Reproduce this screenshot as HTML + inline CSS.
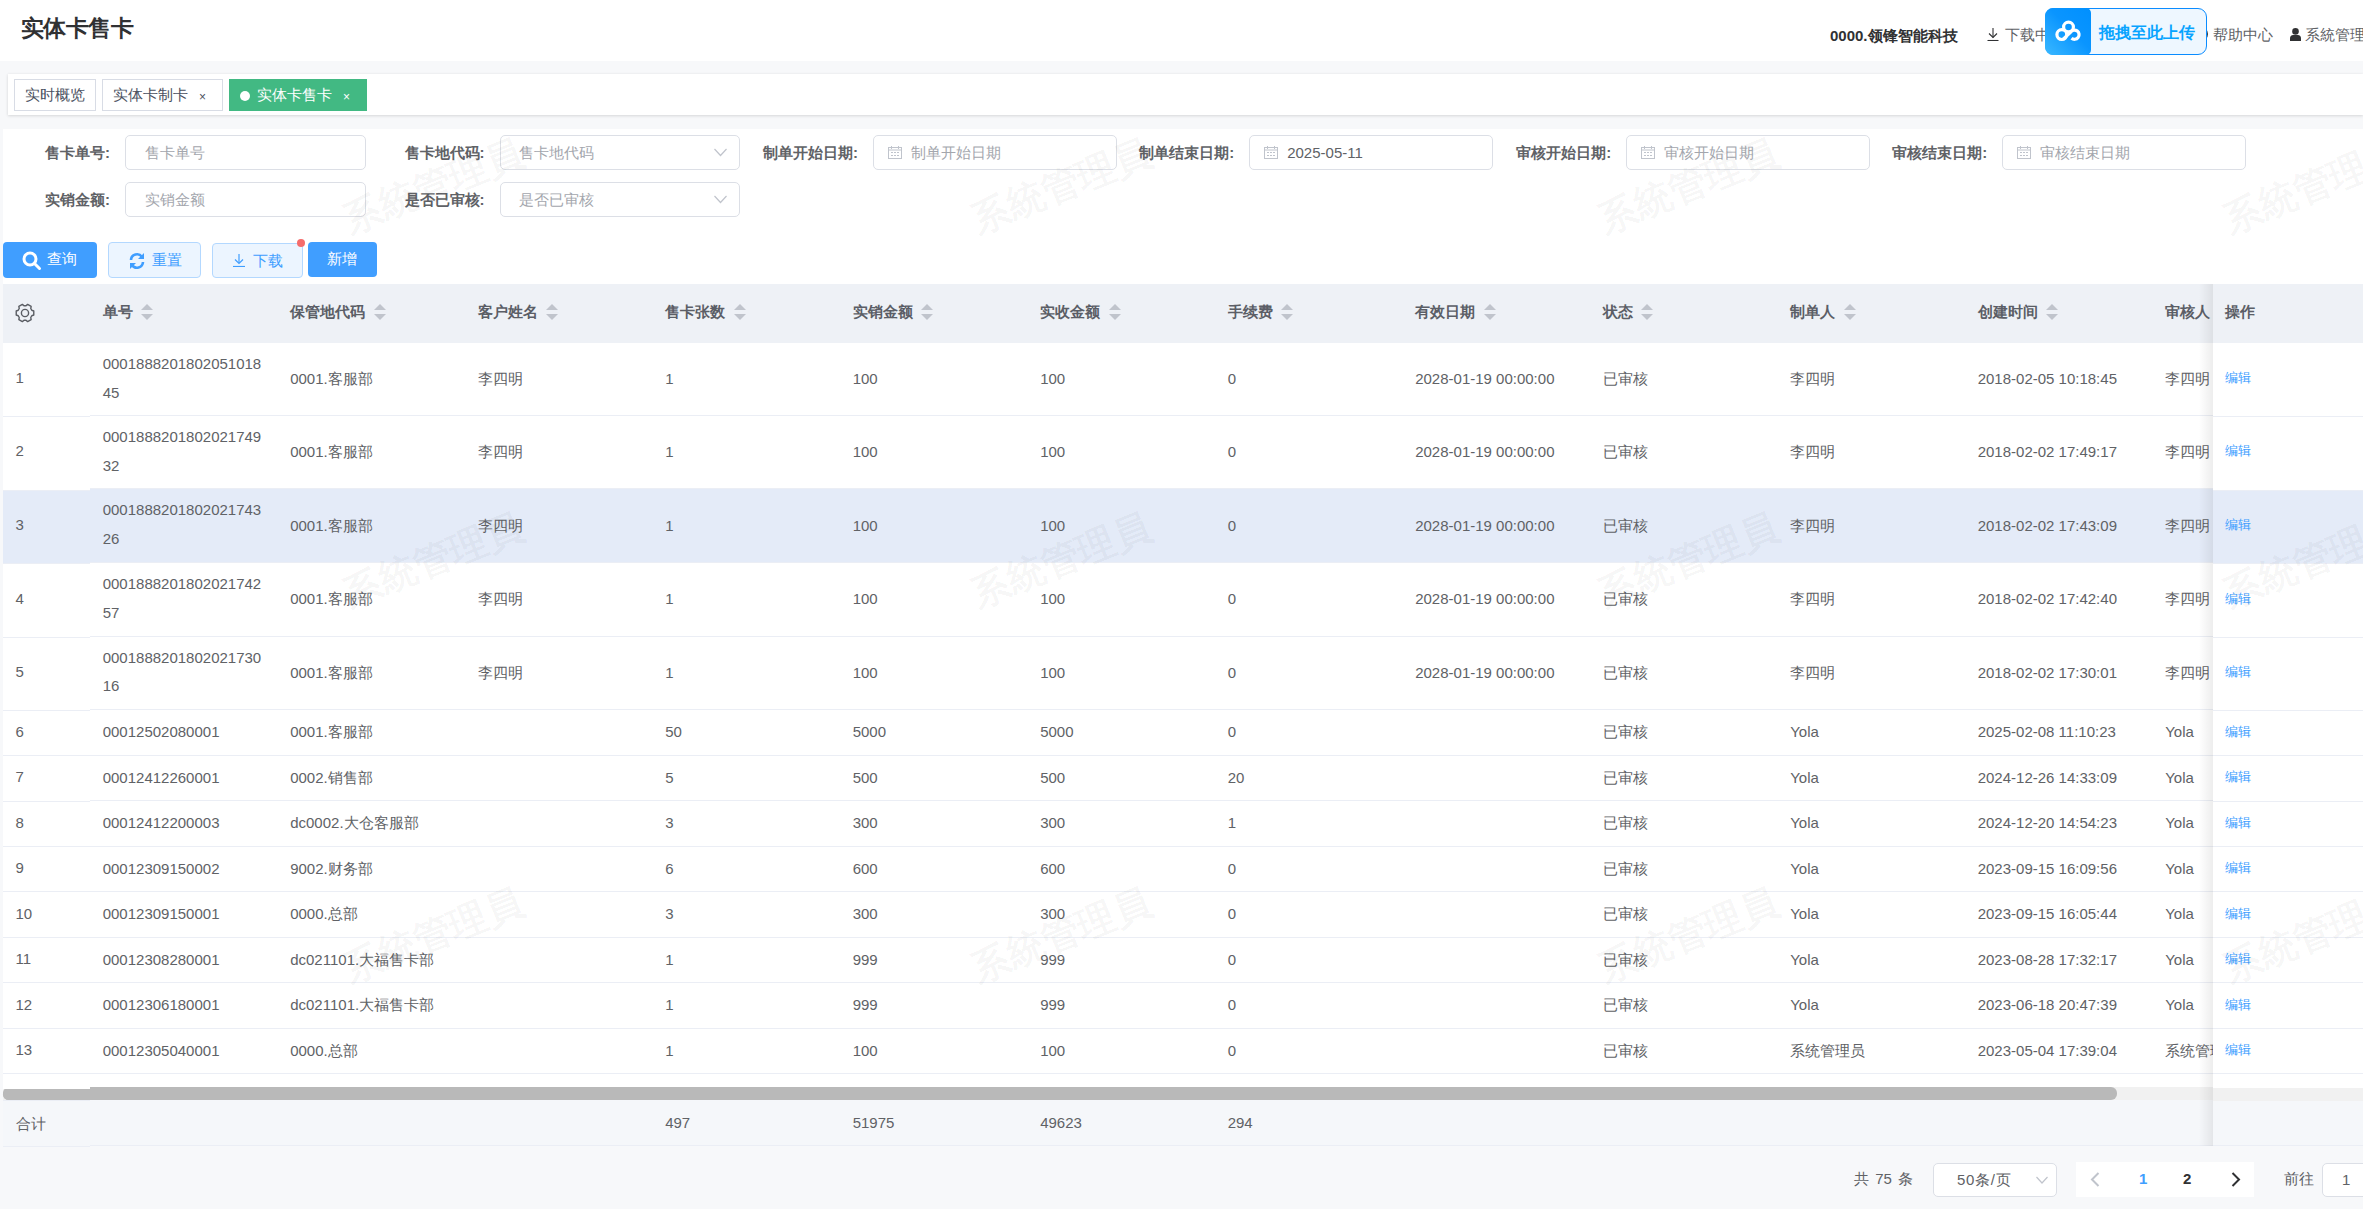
<!DOCTYPE html><html><head><meta charset="utf-8"><style>
*{box-sizing:border-box;margin:0;padding:0}
html,body{width:2363px;height:1209px;overflow:hidden}
body{position:relative;background:#f7f8fa;font-family:"Liberation Sans",sans-serif;font-size:15px;color:#606266}
.abs{position:absolute}
#hdr{left:0;top:0;width:2363px;height:61px;background:#fff}
#title{left:20.5px;top:11px;letter-spacing:-0.4px;font-size:22.5px;font-weight:bold;color:#303133;line-height:36px;white-space:nowrap}
#tags{left:8px;top:74px;width:2355px;height:41px;background:#fff;box-shadow:0 1px 3px 0 rgba(0,0,0,.12),0 0 3px 0 rgba(0,0,0,.04)}
.tab{position:absolute;top:79px;height:32px;border:1px solid #d8dce5;background:#fff;color:#495060;font-size:15px;line-height:30px;white-space:nowrap;padding-left:10px}
.tab .x{position:absolute;font-size:12px;color:#495060;margin-top:1.5px}
#form{left:3px;top:129px;width:2360px;height:155px;background:#fff}
.lbl{position:absolute;font-weight:bold;font-size:15px;color:#606266;white-space:nowrap;line-height:35px;text-align:right}
.inp{position:absolute;height:35px;border:1px solid #dcdfe6;border-radius:5px;background:#fff;color:#a3a6ad;font-size:15px;line-height:33px;white-space:nowrap}
.btn{position:absolute;top:242px;height:36px;border-radius:4px;font-size:15px;line-height:34px;white-space:nowrap;text-align:center}
#tbl{left:3px;top:284px;width:2360px;height:862px;background:#fff;overflow:hidden}
.th{position:absolute;top:0;height:59px;background:#eef1f6}
.cell{position:absolute;white-space:nowrap;font-size:15px;color:#606266}
.hc{position:absolute;white-space:nowrap;font-size:15px;font-weight:bold;color:#5b5e66;top:20px;line-height:18px}
.row{position:absolute;left:0;width:2360px;border-bottom:1px solid #ebeef5;background:#fff}
</style></head><body>
<div id="hdr" class="abs"></div>
<div id="title" class="abs">实体卡售卡</div>
<div class="abs" style="left:1830px;top:25px;font-size:15px;font-weight:bold;color:#303133;line-height:22px;white-space:nowrap">0000.领锋智能科技</div>
<svg class="abs" style="left:1987px;top:28px" width="12" height="13" viewBox="0 0 12 13"><line x1="6" y1="0" x2="6" y2="9.5" stroke="#303133" stroke-width="1.1"/><polyline points="2,5.5 6,9.5 10,5.5" fill="none" stroke="#303133" stroke-width="1.1"/><line x1="0.5" y1="12.5" x2="11.5" y2="12.5" stroke="#303133" stroke-width="1.1"/></svg>
<div class="abs" style="left:2005px;top:24px;font-size:15px;color:#606266;line-height:22px;white-space:nowrap">下载中心</div>
<div class="abs" style="left:2194px;top:27px;width:14px;height:14px;border-radius:50%;background:#303133"></div>
<div class="abs" style="left:2213px;top:24px;font-size:15px;color:#606266;line-height:22px;white-space:nowrap">帮助中心</div>
<svg class="abs" style="left:2290px;top:28px" width="11" height="13" viewBox="0 0 11 13"><circle cx="5.5" cy="3.4" r="3.3" fill="#303133"/><path d="M0 13 L0 10.5 Q0 7.2 3.2 7 L7.8 7 Q11 7.2 11 10.5 L11 13 Z" fill="#303133"/></svg>
<div class="abs" style="left:2305px;top:24px;font-size:15px;color:#606266;line-height:22px;white-space:nowrap">系統管理員</div>
<div class="abs" style="left:2045px;top:8px;width:162px;height:47px;border:1.3px solid #0a8cff;border-radius:9px;background:#eef7ff"></div>
<div class="abs" style="left:2045px;top:8px;width:46px;height:47px;border-radius:8px 5px 5px 8px;background:linear-gradient(225deg,#0090ff 0%,#0a95ff 45%,#3ab8ff 100%)"></div>
<svg class="abs" style="left:2053px;top:18px" width="30" height="26" viewBox="0 0 30 26"><g fill="none" stroke="#fff" stroke-width="3.2"><circle cx="15.5" cy="9" r="4.9"/><circle cx="8.8" cy="16.6" r="4.9"/><path d="M10.5 20.8 L17.6 14.2 A4.6 4.6 0 1 1 18.5 20.2"/></g></svg>
<div class="abs" style="left:2099px;top:20px;font-size:16.3px;font-weight:bold;color:#08a4ff;line-height:24px;white-space:nowrap">拖拽至此上传</div>
<div id="tags" class="abs"></div>
<div class="tab" style="left:14px;width:82px">实时概览</div>
<div class="tab" style="left:102px;width:121px">实体卡制卡<span class="x" style="left:96px;top:0">×</span></div>
<div class="tab" style="left:229px;width:138px;background:#42b983;border-color:#42b983;color:#fff"><span style="position:absolute;left:10px;top:11px;width:10px;height:10px;border-radius:50%;background:#fff"></span><span style="position:absolute;left:27px;top:0">实体卡售卡</span><span class="x" style="left:113px;top:0;color:#fff">×</span></div>
<div id="form" class="abs"></div>
<div class="lbl" style="right:2253px;top:135px">售卡单号:</div>
<div class="inp" style="left:125px;top:135px;width:241px;padding-left:18.5px">售卡单号</div>
<div class="lbl" style="right:1878.5px;top:135px">售卡地代码:</div>
<div class="inp" style="left:499.5px;top:135px;width:240.5px;padding-left:18.5px">售卡地代码<svg style="position:absolute;left:213px;top:12px" width="13" height="9" viewBox="0 0 13 9"><polyline points="0.5,1 6.5,7.5 12.5,1" fill="none" stroke="#c0c4cc" stroke-width="1.2"/></svg></div>
<div class="lbl" style="right:1505px;top:135px">制单开始日期:</div>
<div class="inp" style="left:873px;top:135px;width:243.5px;padding-left:37px;color:#a3a6ad">制单开始日期<svg style="position:absolute;left:14px;top:10px" width="14" height="13" viewBox="0 0 14 13"><rect x="0.5" y="1.5" width="13" height="11" fill="none" stroke="#c0c4cc"/><line x1="0.5" y1="4" x2="13.5" y2="4" stroke="#c0c4cc"/><line x1="3.5" y1="0" x2="3.5" y2="3" stroke="#c0c4cc"/><line x1="10.5" y1="0" x2="10.5" y2="3" stroke="#c0c4cc"/><g fill="#c0c4cc"><rect x="3" y="6" width="2" height="1"/><rect x="6" y="6" width="2" height="1"/><rect x="9" y="6" width="2" height="1"/><rect x="3" y="9" width="2" height="1"/><rect x="6" y="9" width="2" height="1"/><rect x="9" y="9" width="2" height="1"/></g></svg></div>
<div class="lbl" style="right:1128.8px;top:135px">制单结束日期:</div>
<div class="inp" style="left:1249.2px;top:135px;width:243.5px;padding-left:37px;color:#606266">2025-05-11<svg style="position:absolute;left:14px;top:10px" width="14" height="13" viewBox="0 0 14 13"><rect x="0.5" y="1.5" width="13" height="11" fill="none" stroke="#c0c4cc"/><line x1="0.5" y1="4" x2="13.5" y2="4" stroke="#c0c4cc"/><line x1="3.5" y1="0" x2="3.5" y2="3" stroke="#c0c4cc"/><line x1="10.5" y1="0" x2="10.5" y2="3" stroke="#c0c4cc"/><g fill="#c0c4cc"><rect x="3" y="6" width="2" height="1"/><rect x="6" y="6" width="2" height="1"/><rect x="9" y="6" width="2" height="1"/><rect x="3" y="9" width="2" height="1"/><rect x="6" y="9" width="2" height="1"/><rect x="9" y="9" width="2" height="1"/></g></svg></div>
<div class="lbl" style="right:751.7px;top:135px">审核开始日期:</div>
<div class="inp" style="left:1626.3px;top:135px;width:243.5px;padding-left:37px;color:#a3a6ad">审核开始日期<svg style="position:absolute;left:14px;top:10px" width="14" height="13" viewBox="0 0 14 13"><rect x="0.5" y="1.5" width="13" height="11" fill="none" stroke="#c0c4cc"/><line x1="0.5" y1="4" x2="13.5" y2="4" stroke="#c0c4cc"/><line x1="3.5" y1="0" x2="3.5" y2="3" stroke="#c0c4cc"/><line x1="10.5" y1="0" x2="10.5" y2="3" stroke="#c0c4cc"/><g fill="#c0c4cc"><rect x="3" y="6" width="2" height="1"/><rect x="6" y="6" width="2" height="1"/><rect x="9" y="6" width="2" height="1"/><rect x="3" y="9" width="2" height="1"/><rect x="6" y="9" width="2" height="1"/><rect x="9" y="9" width="2" height="1"/></g></svg></div>
<div class="lbl" style="right:375.70000000000005px;top:135px">审核结束日期:</div>
<div class="inp" style="left:2002.3px;top:135px;width:243.5px;padding-left:37px;color:#a3a6ad">审核结束日期<svg style="position:absolute;left:14px;top:10px" width="14" height="13" viewBox="0 0 14 13"><rect x="0.5" y="1.5" width="13" height="11" fill="none" stroke="#c0c4cc"/><line x1="0.5" y1="4" x2="13.5" y2="4" stroke="#c0c4cc"/><line x1="3.5" y1="0" x2="3.5" y2="3" stroke="#c0c4cc"/><line x1="10.5" y1="0" x2="10.5" y2="3" stroke="#c0c4cc"/><g fill="#c0c4cc"><rect x="3" y="6" width="2" height="1"/><rect x="6" y="6" width="2" height="1"/><rect x="9" y="6" width="2" height="1"/><rect x="3" y="9" width="2" height="1"/><rect x="6" y="9" width="2" height="1"/><rect x="9" y="9" width="2" height="1"/></g></svg></div>
<div class="lbl" style="right:2253px;top:182px">实销金额:</div>
<div class="inp" style="left:125px;top:182px;width:241px;padding-left:18.5px">实销金额</div>
<div class="lbl" style="right:1878.5px;top:182px">是否已审核:</div>
<div class="inp" style="left:499.5px;top:182px;width:240.5px;padding-left:18.5px">是否已审核<svg style="position:absolute;left:213px;top:12px" width="13" height="9" viewBox="0 0 13 9"><polyline points="0.5,1 6.5,7.5 12.5,1" fill="none" stroke="#c0c4cc" stroke-width="1.2"/></svg></div>
<div class="btn" style="left:3px;width:94px;background:#409eff;color:#fff;padding-left:23px"><svg style="position:absolute;left:19px;top:9px" width="20" height="20" viewBox="0 0 20 20"><circle cx="8" cy="8" r="6" fill="none" stroke="#fff" stroke-width="3"/><line x1="12.5" y1="12.5" x2="17.5" y2="17.5" stroke="#fff" stroke-width="3" stroke-linecap="round"/></svg>查询</div>
<div class="btn" style="left:108px;width:93px;background:#ecf5ff;border:1px solid #b3d8ff;color:#409eff;padding-left:24px"><svg style="position:absolute;left:19px;top:9px" width="18" height="18" viewBox="0 0 18 18"><path d="M3 8 A6 6 0 0 1 14 5" fill="none" stroke="#409eff" stroke-width="2.6"/><path d="M15 10 A6 6 0 0 1 4 13" fill="none" stroke="#409eff" stroke-width="2.6"/><polygon points="16,1 16,7 10,7" fill="#409eff"/><polygon points="2,17 2,11 8,11" fill="#409eff"/></svg>重置</div>
<div class="btn" style="left:212px;top:243px;height:35px;width:91px;background:#ecf5ff;border:1px solid #b3d8ff;color:#409eff;padding-left:20px"><svg style="position:absolute;left:20px;top:10px" width="12" height="13" viewBox="0 0 12 13"><line x1="6" y1="0" x2="6" y2="9" stroke="#409eff" stroke-width="1.2"/><polyline points="2,5.5 6,9.5 10,5.5" fill="none" stroke="#409eff" stroke-width="1.2"/><line x1="0" y1="12.5" x2="12" y2="12.5" stroke="#409eff" stroke-width="1.2"/></svg>下载</div>
<div class="abs" style="left:297px;top:239px;width:8px;height:8px;border-radius:50%;background:#f56c6c"></div>
<div class="btn" style="left:308px;width:69px;height:35px;background:#409eff;color:#fff;padding-right:2px">新增</div>
<div class="abs" style="left:3px;top:284px;width:2360px;height:862px;background:#fff"></div>
<div class="abs" style="left:3px;top:284px;width:2360px;height:59px;background:#eef1f6"></div>
<div class="abs" style="left:3px;top:343.00px;width:2360px;height:73.00px;background:#fff;border-bottom:1px solid #ebeef5"></div>
<div class="cell" style="left:102.7px;top:349.90px;line-height:28.75px">0001888201802051018<br>45</div>
<div class="cell" style="left:290.2px;top:365.00px;line-height:28.75px">0001.客服部</div>
<div class="cell" style="left:477.7px;top:365.00px;line-height:28.75px">李四明</div>
<div class="cell" style="left:665.2px;top:365.00px;line-height:28.75px">1</div>
<div class="cell" style="left:852.7px;top:365.00px;line-height:28.75px">100</div>
<div class="cell" style="left:1040.2px;top:365.00px;line-height:28.75px">100</div>
<div class="cell" style="left:1227.7px;top:365.00px;line-height:28.75px">0</div>
<div class="cell" style="left:1415.2px;top:365.00px;line-height:28.75px">2028-01-19 00:00:00</div>
<div class="cell" style="left:1602.7px;top:365.00px;line-height:28.75px">已审核</div>
<div class="cell" style="left:1790.2px;top:365.00px;line-height:28.75px">李四明</div>
<div class="cell" style="left:1977.7px;top:365.00px;line-height:28.75px">2018-02-05 10:18:45</div>
<div class="cell" style="left:2165.2px;top:365.00px;line-height:28.75px;width:48px;overflow:hidden">李四明</div>
<div class="abs" style="left:3px;top:416.00px;width:2360px;height:73.00px;background:#fff;border-bottom:1px solid #ebeef5"></div>
<div class="cell" style="left:102.7px;top:422.90px;line-height:28.75px">0001888201802021749<br>32</div>
<div class="cell" style="left:290.2px;top:438.00px;line-height:28.75px">0001.客服部</div>
<div class="cell" style="left:477.7px;top:438.00px;line-height:28.75px">李四明</div>
<div class="cell" style="left:665.2px;top:438.00px;line-height:28.75px">1</div>
<div class="cell" style="left:852.7px;top:438.00px;line-height:28.75px">100</div>
<div class="cell" style="left:1040.2px;top:438.00px;line-height:28.75px">100</div>
<div class="cell" style="left:1227.7px;top:438.00px;line-height:28.75px">0</div>
<div class="cell" style="left:1415.2px;top:438.00px;line-height:28.75px">2028-01-19 00:00:00</div>
<div class="cell" style="left:1602.7px;top:438.00px;line-height:28.75px">已审核</div>
<div class="cell" style="left:1790.2px;top:438.00px;line-height:28.75px">李四明</div>
<div class="cell" style="left:1977.7px;top:438.00px;line-height:28.75px">2018-02-02 17:49:17</div>
<div class="cell" style="left:2165.2px;top:438.00px;line-height:28.75px;width:48px;overflow:hidden">李四明</div>
<div class="abs" style="left:3px;top:489.00px;width:2360px;height:74.00px;background:#e4ebf8;border-bottom:1px solid #ebeef5"></div>
<div class="cell" style="left:102.7px;top:496.40px;line-height:28.75px">0001888201802021743<br>26</div>
<div class="cell" style="left:290.2px;top:511.50px;line-height:28.75px">0001.客服部</div>
<div class="cell" style="left:477.7px;top:511.50px;line-height:28.75px">李四明</div>
<div class="cell" style="left:665.2px;top:511.50px;line-height:28.75px">1</div>
<div class="cell" style="left:852.7px;top:511.50px;line-height:28.75px">100</div>
<div class="cell" style="left:1040.2px;top:511.50px;line-height:28.75px">100</div>
<div class="cell" style="left:1227.7px;top:511.50px;line-height:28.75px">0</div>
<div class="cell" style="left:1415.2px;top:511.50px;line-height:28.75px">2028-01-19 00:00:00</div>
<div class="cell" style="left:1602.7px;top:511.50px;line-height:28.75px">已审核</div>
<div class="cell" style="left:1790.2px;top:511.50px;line-height:28.75px">李四明</div>
<div class="cell" style="left:1977.7px;top:511.50px;line-height:28.75px">2018-02-02 17:43:09</div>
<div class="cell" style="left:2165.2px;top:511.50px;line-height:28.75px;width:48px;overflow:hidden">李四明</div>
<div class="abs" style="left:3px;top:563.00px;width:2360px;height:73.50px;background:#fff;border-bottom:1px solid #ebeef5"></div>
<div class="cell" style="left:102.7px;top:570.15px;line-height:28.75px">0001888201802021742<br>57</div>
<div class="cell" style="left:290.2px;top:585.25px;line-height:28.75px">0001.客服部</div>
<div class="cell" style="left:477.7px;top:585.25px;line-height:28.75px">李四明</div>
<div class="cell" style="left:665.2px;top:585.25px;line-height:28.75px">1</div>
<div class="cell" style="left:852.7px;top:585.25px;line-height:28.75px">100</div>
<div class="cell" style="left:1040.2px;top:585.25px;line-height:28.75px">100</div>
<div class="cell" style="left:1227.7px;top:585.25px;line-height:28.75px">0</div>
<div class="cell" style="left:1415.2px;top:585.25px;line-height:28.75px">2028-01-19 00:00:00</div>
<div class="cell" style="left:1602.7px;top:585.25px;line-height:28.75px">已审核</div>
<div class="cell" style="left:1790.2px;top:585.25px;line-height:28.75px">李四明</div>
<div class="cell" style="left:1977.7px;top:585.25px;line-height:28.75px">2018-02-02 17:42:40</div>
<div class="cell" style="left:2165.2px;top:585.25px;line-height:28.75px;width:48px;overflow:hidden">李四明</div>
<div class="abs" style="left:3px;top:636.50px;width:2360px;height:73.50px;background:#fff;border-bottom:1px solid #ebeef5"></div>
<div class="cell" style="left:102.7px;top:643.65px;line-height:28.75px">0001888201802021730<br>16</div>
<div class="cell" style="left:290.2px;top:658.75px;line-height:28.75px">0001.客服部</div>
<div class="cell" style="left:477.7px;top:658.75px;line-height:28.75px">李四明</div>
<div class="cell" style="left:665.2px;top:658.75px;line-height:28.75px">1</div>
<div class="cell" style="left:852.7px;top:658.75px;line-height:28.75px">100</div>
<div class="cell" style="left:1040.2px;top:658.75px;line-height:28.75px">100</div>
<div class="cell" style="left:1227.7px;top:658.75px;line-height:28.75px">0</div>
<div class="cell" style="left:1415.2px;top:658.75px;line-height:28.75px">2028-01-19 00:00:00</div>
<div class="cell" style="left:1602.7px;top:658.75px;line-height:28.75px">已审核</div>
<div class="cell" style="left:1790.2px;top:658.75px;line-height:28.75px">李四明</div>
<div class="cell" style="left:1977.7px;top:658.75px;line-height:28.75px">2018-02-02 17:30:01</div>
<div class="cell" style="left:2165.2px;top:658.75px;line-height:28.75px;width:48px;overflow:hidden">李四明</div>
<div class="abs" style="left:3px;top:710.00px;width:2360px;height:45.50px;background:#fff;border-bottom:1px solid #ebeef5"></div>
<div class="cell" style="left:102.7px;top:718.05px;line-height:28.75px">00012502080001</div>
<div class="cell" style="left:290.2px;top:718.05px;line-height:28.75px">0001.客服部</div>
<div class="cell" style="left:665.2px;top:718.05px;line-height:28.75px">50</div>
<div class="cell" style="left:852.7px;top:718.05px;line-height:28.75px">5000</div>
<div class="cell" style="left:1040.2px;top:718.05px;line-height:28.75px">5000</div>
<div class="cell" style="left:1227.7px;top:718.05px;line-height:28.75px">0</div>
<div class="cell" style="left:1602.7px;top:718.05px;line-height:28.75px">已审核</div>
<div class="cell" style="left:1790.2px;top:718.05px;line-height:28.75px">Yola</div>
<div class="cell" style="left:1977.7px;top:718.05px;line-height:28.75px">2025-02-08 11:10:23</div>
<div class="cell" style="left:2165.2px;top:718.05px;line-height:28.75px;width:48px;overflow:hidden">Yola</div>
<div class="abs" style="left:3px;top:755.50px;width:2360px;height:45.50px;background:#fff;border-bottom:1px solid #ebeef5"></div>
<div class="cell" style="left:102.7px;top:763.55px;line-height:28.75px">00012412260001</div>
<div class="cell" style="left:290.2px;top:763.55px;line-height:28.75px">0002.销售部</div>
<div class="cell" style="left:665.2px;top:763.55px;line-height:28.75px">5</div>
<div class="cell" style="left:852.7px;top:763.55px;line-height:28.75px">500</div>
<div class="cell" style="left:1040.2px;top:763.55px;line-height:28.75px">500</div>
<div class="cell" style="left:1227.7px;top:763.55px;line-height:28.75px">20</div>
<div class="cell" style="left:1602.7px;top:763.55px;line-height:28.75px">已审核</div>
<div class="cell" style="left:1790.2px;top:763.55px;line-height:28.75px">Yola</div>
<div class="cell" style="left:1977.7px;top:763.55px;line-height:28.75px">2024-12-26 14:33:09</div>
<div class="cell" style="left:2165.2px;top:763.55px;line-height:28.75px;width:48px;overflow:hidden">Yola</div>
<div class="abs" style="left:3px;top:801.00px;width:2360px;height:45.50px;background:#fff;border-bottom:1px solid #ebeef5"></div>
<div class="cell" style="left:102.7px;top:809.05px;line-height:28.75px">00012412200003</div>
<div class="cell" style="left:290.2px;top:809.05px;line-height:28.75px">dc0002.大仓客服部</div>
<div class="cell" style="left:665.2px;top:809.05px;line-height:28.75px">3</div>
<div class="cell" style="left:852.7px;top:809.05px;line-height:28.75px">300</div>
<div class="cell" style="left:1040.2px;top:809.05px;line-height:28.75px">300</div>
<div class="cell" style="left:1227.7px;top:809.05px;line-height:28.75px">1</div>
<div class="cell" style="left:1602.7px;top:809.05px;line-height:28.75px">已审核</div>
<div class="cell" style="left:1790.2px;top:809.05px;line-height:28.75px">Yola</div>
<div class="cell" style="left:1977.7px;top:809.05px;line-height:28.75px">2024-12-20 14:54:23</div>
<div class="cell" style="left:2165.2px;top:809.05px;line-height:28.75px;width:48px;overflow:hidden">Yola</div>
<div class="abs" style="left:3px;top:846.50px;width:2360px;height:45.50px;background:#fff;border-bottom:1px solid #ebeef5"></div>
<div class="cell" style="left:102.7px;top:854.55px;line-height:28.75px">00012309150002</div>
<div class="cell" style="left:290.2px;top:854.55px;line-height:28.75px">9002.财务部</div>
<div class="cell" style="left:665.2px;top:854.55px;line-height:28.75px">6</div>
<div class="cell" style="left:852.7px;top:854.55px;line-height:28.75px">600</div>
<div class="cell" style="left:1040.2px;top:854.55px;line-height:28.75px">600</div>
<div class="cell" style="left:1227.7px;top:854.55px;line-height:28.75px">0</div>
<div class="cell" style="left:1602.7px;top:854.55px;line-height:28.75px">已审核</div>
<div class="cell" style="left:1790.2px;top:854.55px;line-height:28.75px">Yola</div>
<div class="cell" style="left:1977.7px;top:854.55px;line-height:28.75px">2023-09-15 16:09:56</div>
<div class="cell" style="left:2165.2px;top:854.55px;line-height:28.75px;width:48px;overflow:hidden">Yola</div>
<div class="abs" style="left:3px;top:892.00px;width:2360px;height:45.50px;background:#fff;border-bottom:1px solid #ebeef5"></div>
<div class="cell" style="left:102.7px;top:900.05px;line-height:28.75px">00012309150001</div>
<div class="cell" style="left:290.2px;top:900.05px;line-height:28.75px">0000.总部</div>
<div class="cell" style="left:665.2px;top:900.05px;line-height:28.75px">3</div>
<div class="cell" style="left:852.7px;top:900.05px;line-height:28.75px">300</div>
<div class="cell" style="left:1040.2px;top:900.05px;line-height:28.75px">300</div>
<div class="cell" style="left:1227.7px;top:900.05px;line-height:28.75px">0</div>
<div class="cell" style="left:1602.7px;top:900.05px;line-height:28.75px">已审核</div>
<div class="cell" style="left:1790.2px;top:900.05px;line-height:28.75px">Yola</div>
<div class="cell" style="left:1977.7px;top:900.05px;line-height:28.75px">2023-09-15 16:05:44</div>
<div class="cell" style="left:2165.2px;top:900.05px;line-height:28.75px;width:48px;overflow:hidden">Yola</div>
<div class="abs" style="left:3px;top:937.50px;width:2360px;height:45.50px;background:#fff;border-bottom:1px solid #ebeef5"></div>
<div class="cell" style="left:102.7px;top:945.55px;line-height:28.75px">00012308280001</div>
<div class="cell" style="left:290.2px;top:945.55px;line-height:28.75px">dc021101.大福售卡部</div>
<div class="cell" style="left:665.2px;top:945.55px;line-height:28.75px">1</div>
<div class="cell" style="left:852.7px;top:945.55px;line-height:28.75px">999</div>
<div class="cell" style="left:1040.2px;top:945.55px;line-height:28.75px">999</div>
<div class="cell" style="left:1227.7px;top:945.55px;line-height:28.75px">0</div>
<div class="cell" style="left:1602.7px;top:945.55px;line-height:28.75px">已审核</div>
<div class="cell" style="left:1790.2px;top:945.55px;line-height:28.75px">Yola</div>
<div class="cell" style="left:1977.7px;top:945.55px;line-height:28.75px">2023-08-28 17:32:17</div>
<div class="cell" style="left:2165.2px;top:945.55px;line-height:28.75px;width:48px;overflow:hidden">Yola</div>
<div class="abs" style="left:3px;top:983.00px;width:2360px;height:45.50px;background:#fff;border-bottom:1px solid #ebeef5"></div>
<div class="cell" style="left:102.7px;top:991.05px;line-height:28.75px">00012306180001</div>
<div class="cell" style="left:290.2px;top:991.05px;line-height:28.75px">dc021101.大福售卡部</div>
<div class="cell" style="left:665.2px;top:991.05px;line-height:28.75px">1</div>
<div class="cell" style="left:852.7px;top:991.05px;line-height:28.75px">999</div>
<div class="cell" style="left:1040.2px;top:991.05px;line-height:28.75px">999</div>
<div class="cell" style="left:1227.7px;top:991.05px;line-height:28.75px">0</div>
<div class="cell" style="left:1602.7px;top:991.05px;line-height:28.75px">已审核</div>
<div class="cell" style="left:1790.2px;top:991.05px;line-height:28.75px">Yola</div>
<div class="cell" style="left:1977.7px;top:991.05px;line-height:28.75px">2023-06-18 20:47:39</div>
<div class="cell" style="left:2165.2px;top:991.05px;line-height:28.75px;width:48px;overflow:hidden">Yola</div>
<div class="abs" style="left:3px;top:1028.50px;width:2360px;height:45.50px;background:#fff;border-bottom:1px solid #ebeef5"></div>
<div class="cell" style="left:102.7px;top:1036.55px;line-height:28.75px">00012305040001</div>
<div class="cell" style="left:290.2px;top:1036.55px;line-height:28.75px">0000.总部</div>
<div class="cell" style="left:665.2px;top:1036.55px;line-height:28.75px">1</div>
<div class="cell" style="left:852.7px;top:1036.55px;line-height:28.75px">100</div>
<div class="cell" style="left:1040.2px;top:1036.55px;line-height:28.75px">100</div>
<div class="cell" style="left:1227.7px;top:1036.55px;line-height:28.75px">0</div>
<div class="cell" style="left:1602.7px;top:1036.55px;line-height:28.75px">已审核</div>
<div class="cell" style="left:1790.2px;top:1036.55px;line-height:28.75px">系统管理员</div>
<div class="cell" style="left:1977.7px;top:1036.55px;line-height:28.75px">2023-05-04 17:39:04</div>
<div class="cell" style="left:2165.2px;top:1036.55px;line-height:28.75px;width:48px;overflow:hidden">系统管理员</div>
<div class="abs" style="left:3px;top:344.00px;width:87px;height:73.40px;background:#fff;border-bottom:1px solid #ebeef5"></div>
<div class="cell" style="left:15.5px;top:364.30px;line-height:28.75px">1</div>
<div class="abs" style="left:3px;top:417.40px;width:87px;height:73.40px;background:#fff;border-bottom:1px solid #ebeef5"></div>
<div class="cell" style="left:15.5px;top:437.30px;line-height:28.75px">2</div>
<div class="abs" style="left:3px;top:490.80px;width:87px;height:73.40px;background:#e4ebf8;border-bottom:1px solid #ebeef5"></div>
<div class="cell" style="left:15.5px;top:510.80px;line-height:28.75px">3</div>
<div class="abs" style="left:3px;top:564.20px;width:87px;height:73.40px;background:#fff;border-bottom:1px solid #ebeef5"></div>
<div class="cell" style="left:15.5px;top:584.55px;line-height:28.75px">4</div>
<div class="abs" style="left:3px;top:637.60px;width:87px;height:73.40px;background:#fff;border-bottom:1px solid #ebeef5"></div>
<div class="cell" style="left:15.5px;top:658.05px;line-height:28.75px">5</div>
<div class="abs" style="left:3px;top:711.00px;width:87px;height:45.38px;background:#fff;border-bottom:1px solid #ebeef5"></div>
<div class="cell" style="left:15.5px;top:717.55px;line-height:28.75px">6</div>
<div class="abs" style="left:3px;top:756.38px;width:87px;height:45.38px;background:#fff;border-bottom:1px solid #ebeef5"></div>
<div class="cell" style="left:15.5px;top:763.05px;line-height:28.75px">7</div>
<div class="abs" style="left:3px;top:801.75px;width:87px;height:45.38px;background:#fff;border-bottom:1px solid #ebeef5"></div>
<div class="cell" style="left:15.5px;top:808.55px;line-height:28.75px">8</div>
<div class="abs" style="left:3px;top:847.12px;width:87px;height:45.38px;background:#fff;border-bottom:1px solid #ebeef5"></div>
<div class="cell" style="left:15.5px;top:854.05px;line-height:28.75px">9</div>
<div class="abs" style="left:3px;top:892.50px;width:87px;height:45.38px;background:#fff;border-bottom:1px solid #ebeef5"></div>
<div class="cell" style="left:15.5px;top:899.55px;line-height:28.75px">10</div>
<div class="abs" style="left:3px;top:937.88px;width:87px;height:45.38px;background:#fff;border-bottom:1px solid #ebeef5"></div>
<div class="cell" style="left:15.5px;top:945.05px;line-height:28.75px">11</div>
<div class="abs" style="left:3px;top:983.25px;width:87px;height:45.38px;background:#fff;border-bottom:1px solid #ebeef5"></div>
<div class="cell" style="left:15.5px;top:990.55px;line-height:28.75px">12</div>
<div class="abs" style="left:3px;top:1028.62px;width:87px;height:45.38px;background:#fff;border-bottom:1px solid #ebeef5"></div>
<div class="cell" style="left:15.5px;top:1036.05px;line-height:28.75px">13</div>
<div class="abs" style="left:15px;top:302.5px;line-height:0"><svg width="20" height="20" viewBox="0 0 20 20"><path d="M18.77 7.98 L18.77 12.02 L16.77 12.73 L15.75 14.49 L16.14 16.58 L12.63 18.61 L11.02 17.23 L8.98 17.23 L7.37 18.61 L3.86 16.58 L4.25 14.49 L3.23 12.73 L1.23 12.02 L1.23 7.98 L3.23 7.27 L4.25 5.51 L3.86 3.42 L7.37 1.39 L8.98 2.77 L11.02 2.77 L12.63 1.39 L16.14 3.42 L15.75 5.51 L16.77 7.27 Z" fill="none" stroke="#5a5d63" stroke-width="1.4" stroke-linejoin="round"/><circle cx="10" cy="10" r="3.6" fill="none" stroke="#5a5d63" stroke-width="1.4"/></svg></div>
<div class="hc" style="left:102.7px;top:303px;line-height:18px">单号</div>
<div class="abs" style="left:141.2px;top:0"><svg style="position:absolute;top:304px;left:0px" width="12" height="17" viewBox="0 0 12 17"><polygon points="6,0 12,6 0,6" fill="#c0c4cc"/><polygon points="0,10 12,10 6,16" fill="#c0c4cc"/></svg></div>
<div class="hc" style="left:290.2px;top:303px;line-height:18px">保管地代码</div>
<div class="abs" style="left:373.7px;top:0"><svg style="position:absolute;top:304px;left:0px" width="12" height="17" viewBox="0 0 12 17"><polygon points="6,0 12,6 0,6" fill="#c0c4cc"/><polygon points="0,10 12,10 6,16" fill="#c0c4cc"/></svg></div>
<div class="hc" style="left:477.7px;top:303px;line-height:18px">客户姓名</div>
<div class="abs" style="left:546.2px;top:0"><svg style="position:absolute;top:304px;left:0px" width="12" height="17" viewBox="0 0 12 17"><polygon points="6,0 12,6 0,6" fill="#c0c4cc"/><polygon points="0,10 12,10 6,16" fill="#c0c4cc"/></svg></div>
<div class="hc" style="left:665.2px;top:303px;line-height:18px">售卡张数</div>
<div class="abs" style="left:733.7px;top:0"><svg style="position:absolute;top:304px;left:0px" width="12" height="17" viewBox="0 0 12 17"><polygon points="6,0 12,6 0,6" fill="#c0c4cc"/><polygon points="0,10 12,10 6,16" fill="#c0c4cc"/></svg></div>
<div class="hc" style="left:852.7px;top:303px;line-height:18px">实销金额</div>
<div class="abs" style="left:921.2px;top:0"><svg style="position:absolute;top:304px;left:0px" width="12" height="17" viewBox="0 0 12 17"><polygon points="6,0 12,6 0,6" fill="#c0c4cc"/><polygon points="0,10 12,10 6,16" fill="#c0c4cc"/></svg></div>
<div class="hc" style="left:1040.2px;top:303px;line-height:18px">实收金额</div>
<div class="abs" style="left:1108.7px;top:0"><svg style="position:absolute;top:304px;left:0px" width="12" height="17" viewBox="0 0 12 17"><polygon points="6,0 12,6 0,6" fill="#c0c4cc"/><polygon points="0,10 12,10 6,16" fill="#c0c4cc"/></svg></div>
<div class="hc" style="left:1227.7px;top:303px;line-height:18px">手续费</div>
<div class="abs" style="left:1281.2px;top:0"><svg style="position:absolute;top:304px;left:0px" width="12" height="17" viewBox="0 0 12 17"><polygon points="6,0 12,6 0,6" fill="#c0c4cc"/><polygon points="0,10 12,10 6,16" fill="#c0c4cc"/></svg></div>
<div class="hc" style="left:1415.2px;top:303px;line-height:18px">有效日期</div>
<div class="abs" style="left:1483.7px;top:0"><svg style="position:absolute;top:304px;left:0px" width="12" height="17" viewBox="0 0 12 17"><polygon points="6,0 12,6 0,6" fill="#c0c4cc"/><polygon points="0,10 12,10 6,16" fill="#c0c4cc"/></svg></div>
<div class="hc" style="left:1602.7px;top:303px;line-height:18px">状态</div>
<div class="abs" style="left:1641.2px;top:0"><svg style="position:absolute;top:304px;left:0px" width="12" height="17" viewBox="0 0 12 17"><polygon points="6,0 12,6 0,6" fill="#c0c4cc"/><polygon points="0,10 12,10 6,16" fill="#c0c4cc"/></svg></div>
<div class="hc" style="left:1790.2px;top:303px;line-height:18px">制单人</div>
<div class="abs" style="left:1843.7px;top:0"><svg style="position:absolute;top:304px;left:0px" width="12" height="17" viewBox="0 0 12 17"><polygon points="6,0 12,6 0,6" fill="#c0c4cc"/><polygon points="0,10 12,10 6,16" fill="#c0c4cc"/></svg></div>
<div class="hc" style="left:1977.7px;top:303px;line-height:18px">创建时间</div>
<div class="abs" style="left:2046.2px;top:0"><svg style="position:absolute;top:304px;left:0px" width="12" height="17" viewBox="0 0 12 17"><polygon points="6,0 12,6 0,6" fill="#c0c4cc"/><polygon points="0,10 12,10 6,16" fill="#c0c4cc"/></svg></div>
<div class="hc" style="left:2165.2px;top:303px;line-height:18px">审核人</div>
<div class="abs" style="left:3px;top:1087px;width:2210px;height:13px;background:#f1f1f1"></div>
<div class="abs" style="left:3px;top:1087px;width:2114px;height:13px;background:#b9b9b9;border-radius:6px"></div>
<div class="abs" style="left:3px;top:1087px;width:87px;height:2px;background:#fff"></div>
<div class="abs" style="left:3px;top:1089px;width:87px;height:11px;background:#b9b9b9;border-radius:5.5px 0 0 5.5px"></div>
<div class="abs" style="left:3px;top:1100px;width:2360px;height:46px;background:#f5f7fa;border-bottom:1px solid #ebeef5"></div>
<div class="abs" style="left:3px;top:1100px;width:87px;height:47px;background:#f5f7fa;border-top:1px solid #ebeef5;border-bottom:1px solid #ebeef5"></div>
<div class="cell" style="left:15.5px;top:1109.5px;line-height:28.75px">合计</div>
<div class="cell" style="left:665.2px;top:1109px;line-height:28.75px">497</div>
<div class="cell" style="left:852.7px;top:1109px;line-height:28.75px">51975</div>
<div class="cell" style="left:1040.2px;top:1109px;line-height:28.75px">49623</div>
<div class="cell" style="left:1227.7px;top:1109px;line-height:28.75px">294</div>
<div class="abs" style="left:2213px;top:284px;width:150px;height:862px;background:#fff"></div>
<div class="abs" style="left:2199px;top:284px;width:14px;height:862px;background:linear-gradient(to right,rgba(0,0,0,0),rgba(0,0,0,.07))"></div>
<div class="abs" style="left:2213px;top:284px;width:150px;height:59px;background:#eef1f6"></div>
<div class="hc" style="left:2225px;top:303px;line-height:18px">操作</div>
<div class="abs" style="left:2213px;top:344.00px;width:150px;height:73.40px;background:#fff;border-bottom:1px solid #ebeef5"></div>
<div class="cell" style="left:2225px;top:364.30px;line-height:28.75px;color:#409eff;font-size:13px">编辑</div>
<div class="abs" style="left:2213px;top:417.40px;width:150px;height:73.40px;background:#fff;border-bottom:1px solid #ebeef5"></div>
<div class="cell" style="left:2225px;top:437.30px;line-height:28.75px;color:#409eff;font-size:13px">编辑</div>
<div class="abs" style="left:2213px;top:490.80px;width:150px;height:73.40px;background:#e4ebf8;border-bottom:1px solid #ebeef5"></div>
<div class="cell" style="left:2225px;top:510.80px;line-height:28.75px;color:#409eff;font-size:13px">编辑</div>
<div class="abs" style="left:2213px;top:564.20px;width:150px;height:73.40px;background:#fff;border-bottom:1px solid #ebeef5"></div>
<div class="cell" style="left:2225px;top:584.55px;line-height:28.75px;color:#409eff;font-size:13px">编辑</div>
<div class="abs" style="left:2213px;top:637.60px;width:150px;height:73.40px;background:#fff;border-bottom:1px solid #ebeef5"></div>
<div class="cell" style="left:2225px;top:658.05px;line-height:28.75px;color:#409eff;font-size:13px">编辑</div>
<div class="abs" style="left:2213px;top:711.00px;width:150px;height:45.38px;background:#fff;border-bottom:1px solid #ebeef5"></div>
<div class="cell" style="left:2225px;top:717.55px;line-height:28.75px;color:#409eff;font-size:13px">编辑</div>
<div class="abs" style="left:2213px;top:756.38px;width:150px;height:45.38px;background:#fff;border-bottom:1px solid #ebeef5"></div>
<div class="cell" style="left:2225px;top:763.05px;line-height:28.75px;color:#409eff;font-size:13px">编辑</div>
<div class="abs" style="left:2213px;top:801.75px;width:150px;height:45.38px;background:#fff;border-bottom:1px solid #ebeef5"></div>
<div class="cell" style="left:2225px;top:808.55px;line-height:28.75px;color:#409eff;font-size:13px">编辑</div>
<div class="abs" style="left:2213px;top:847.12px;width:150px;height:45.38px;background:#fff;border-bottom:1px solid #ebeef5"></div>
<div class="cell" style="left:2225px;top:854.05px;line-height:28.75px;color:#409eff;font-size:13px">编辑</div>
<div class="abs" style="left:2213px;top:892.50px;width:150px;height:45.38px;background:#fff;border-bottom:1px solid #ebeef5"></div>
<div class="cell" style="left:2225px;top:899.55px;line-height:28.75px;color:#409eff;font-size:13px">编辑</div>
<div class="abs" style="left:2213px;top:937.88px;width:150px;height:45.38px;background:#fff;border-bottom:1px solid #ebeef5"></div>
<div class="cell" style="left:2225px;top:945.05px;line-height:28.75px;color:#409eff;font-size:13px">编辑</div>
<div class="abs" style="left:2213px;top:983.25px;width:150px;height:45.38px;background:#fff;border-bottom:1px solid #ebeef5"></div>
<div class="cell" style="left:2225px;top:990.55px;line-height:28.75px;color:#409eff;font-size:13px">编辑</div>
<div class="abs" style="left:2213px;top:1028.62px;width:150px;height:45.38px;background:#fff;border-bottom:1px solid #ebeef5"></div>
<div class="cell" style="left:2225px;top:1036.05px;line-height:28.75px;color:#409eff;font-size:13px">编辑</div>
<div class="abs" style="left:2213px;top:1088px;width:150px;height:13px;background:#f1f1f1"></div>
<div class="abs" style="left:2213px;top:1101px;width:150px;height:45px;background:#f5f7fa;border-bottom:1px solid #ebeef5"></div>
<div class="cell" style="left:1854px;top:1165px;line-height:28.75px;word-spacing:2px">共 75 条</div>
<div class="inp" style="left:1933px;top:1163px;width:124px;height:34px;padding-left:23px;color:#606266;line-height:31px;letter-spacing:0.7px">50条/页<svg style="position:absolute;left:102px;top:12px" width="12" height="8" viewBox="0 0 12 8"><polyline points="0.5,1 6,7 11.5,1" fill="none" stroke="#c0c4cc" stroke-width="1.2"/></svg></div>
<div class="abs" style="left:2076px;top:1162px;width:178px;height:35px;background:#fff"></div>
<svg class="abs" style="left:2090px;top:1172px" width="10" height="15" viewBox="0 0 10 15"><polyline points="8.5,1 2,7.5 8.5,14" fill="none" stroke="#c0c4cc" stroke-width="2"/></svg>
<div class="cell" style="left:2139px;top:1165px;line-height:28.75px;color:#409eff;font-weight:bold">1</div>
<div class="cell" style="left:2183px;top:1165px;line-height:28.75px;color:#303133;font-weight:bold">2</div>
<svg class="abs" style="left:2231px;top:1172px" width="10" height="15" viewBox="0 0 10 15"><polyline points="1.5,1 8,7.5 1.5,14" fill="none" stroke="#303133" stroke-width="2"/></svg>
<div class="cell" style="left:2284px;top:1165px;line-height:28.75px">前往</div>
<div class="inp" style="left:2322px;top:1163px;width:60px;height:34px;padding-left:19px;color:#606266;line-height:31px">1</div>
<div class="abs" style="left:333px;top:161px;width:200px;height:50px;text-align:center;line-height:50px;font-size:38px;font-weight:bold;color:rgba(0,0,0,.04);white-space:nowrap;transform:rotate(-22deg);pointer-events:none">系統管理員</div>
<div class="abs" style="left:961px;top:161px;width:200px;height:50px;text-align:center;line-height:50px;font-size:38px;font-weight:bold;color:rgba(0,0,0,.04);white-space:nowrap;transform:rotate(-22deg);pointer-events:none">系統管理員</div>
<div class="abs" style="left:1588px;top:161px;width:200px;height:50px;text-align:center;line-height:50px;font-size:38px;font-weight:bold;color:rgba(0,0,0,.04);white-space:nowrap;transform:rotate(-22deg);pointer-events:none">系統管理員</div>
<div class="abs" style="left:2213px;top:161px;width:200px;height:50px;text-align:center;line-height:50px;font-size:38px;font-weight:bold;color:rgba(0,0,0,.04);white-space:nowrap;transform:rotate(-22deg);pointer-events:none">系統管理員</div>
<div class="abs" style="left:333px;top:535px;width:200px;height:50px;text-align:center;line-height:50px;font-size:38px;font-weight:bold;color:rgba(0,0,0,.04);white-space:nowrap;transform:rotate(-22deg);pointer-events:none">系統管理員</div>
<div class="abs" style="left:961px;top:535px;width:200px;height:50px;text-align:center;line-height:50px;font-size:38px;font-weight:bold;color:rgba(0,0,0,.04);white-space:nowrap;transform:rotate(-22deg);pointer-events:none">系統管理員</div>
<div class="abs" style="left:1588px;top:535px;width:200px;height:50px;text-align:center;line-height:50px;font-size:38px;font-weight:bold;color:rgba(0,0,0,.04);white-space:nowrap;transform:rotate(-22deg);pointer-events:none">系統管理員</div>
<div class="abs" style="left:2213px;top:535px;width:200px;height:50px;text-align:center;line-height:50px;font-size:38px;font-weight:bold;color:rgba(0,0,0,.04);white-space:nowrap;transform:rotate(-22deg);pointer-events:none">系統管理員</div>
<div class="abs" style="left:333px;top:910px;width:200px;height:50px;text-align:center;line-height:50px;font-size:38px;font-weight:bold;color:rgba(0,0,0,.04);white-space:nowrap;transform:rotate(-22deg);pointer-events:none">系統管理員</div>
<div class="abs" style="left:961px;top:910px;width:200px;height:50px;text-align:center;line-height:50px;font-size:38px;font-weight:bold;color:rgba(0,0,0,.04);white-space:nowrap;transform:rotate(-22deg);pointer-events:none">系統管理員</div>
<div class="abs" style="left:1588px;top:910px;width:200px;height:50px;text-align:center;line-height:50px;font-size:38px;font-weight:bold;color:rgba(0,0,0,.04);white-space:nowrap;transform:rotate(-22deg);pointer-events:none">系統管理員</div>
<div class="abs" style="left:2213px;top:910px;width:200px;height:50px;text-align:center;line-height:50px;font-size:38px;font-weight:bold;color:rgba(0,0,0,.04);white-space:nowrap;transform:rotate(-22deg);pointer-events:none">系統管理員</div>
</body></html>
